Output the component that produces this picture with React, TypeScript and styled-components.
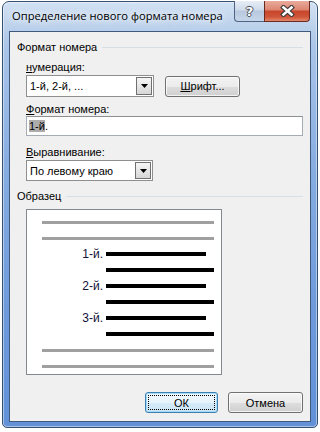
import styled, { createGlobalStyle, css } from "styled-components";

const GlobalStyle = createGlobalStyle`
  html, body {
    margin: 0;
    padding: 0;
    background: #fff;
  }
  body {
    font-family: "Liberation Sans", Arial, sans-serif;
    font-size: 11px;
    color: #000;
  }
  * {
    box-sizing: border-box;
  }
`;

const Page = styled.div`
  width: 320px;
  height: 432px;
  padding: 1px 0 0 2px;
`;

const Window = styled.div`
  width: 316px;
  height: 427px;
  border: 1px solid #34506f;
  border-radius: 7px 7px 5px 5px;
  background: linear-gradient(
    180deg,
    #d3e2f4 0px,
    #bed3ec 22px,
    #aac5e9 45px,
    #88aee2 160px,
    #6f9bdb 300px,
    #6291d8 427px
  );
  box-shadow: inset 0 0 0 1px rgba(255, 255, 255, 0.45);
  display: flex;
  flex-direction: column;
  padding: 0 6px 5px 6px;
`;

const TitleBar = styled.div`
  height: 29px;
  display: flex;
  align-items: flex-start;
`;

const Title = styled.div`
  flex: 1;
  padding: 6px 0 0 3px;
  font-family: "Open Sans", "Noto Sans", sans-serif;
  font-size: 11.2px;
  line-height: 15px;
  color: #000;
  text-shadow: 0 0 6px #fff, 0 0 10px rgba(255, 255, 255, 0.9);
  white-space: nowrap;
`;

const Controls = styled.div`
  display: flex;
  margin: -1px 1px 0 0;
`;

const CaptionButton = styled.div<{ $close?: boolean }>`
  height: 21px;
  width: ${(p) => (p.$close ? 46 : 30)}px;
  display: flex;
  align-items: center;
  justify-content: center;
  border: 1px solid #4f6482;
  border-top: none;
  ${(p) =>
    p.$close
      ? css`
          border-color: #6b2a20;
          border-radius: 0 0 4px 0;
          background: linear-gradient(
            180deg,
            #e9ab9d 0%,
            #dc8570 45%,
            #c7452b 50%,
            #d0553a 80%,
            #e38a6c 100%
          );
        `
      : css`
          border-right: none;
          border-radius: 0 0 0 4px;
          background: linear-gradient(
            180deg,
            #e6edf6 0%,
            #cfdbea 45%,
            #b7c8de 50%,
            #c6d6ea 100%
          );
        `}
`;

const HelpGlyph = styled.span`
  font-family: "DejaVu Sans", sans-serif;
  font-weight: bold;
  font-size: 13px;
  line-height: 13px;
  color: #fff;
  text-shadow: 1px 0 0 #4a4f5a, -1px 0 0 #4a4f5a, 0 1px 0 #4a4f5a,
    0 -1px 0 #4a4f5a;
`;

const Client = styled.div`
  flex: 1;
  background: #f0f0f0;
  border: 1px solid #3f5a7c;
  display: flex;
  flex-direction: column;
  padding: 8px 7px 8px 7px;
`;

const GroupHeader = styled.div<{ $top?: number }>`
  display: flex;
  align-items: center;
  gap: 5px;
  height: 15px;
  line-height: 15px;
  margin-top: ${(p) => p.$top ?? 0}px;
  &::after {
    content: "";
    flex: 1;
    height: 1px;
    background: #d5dfe5;
  }
`;

const Group = styled.div`
  display: flex;
  flex-direction: column;
  padding-left: 9px;
`;

const Label = styled.div<{ $top: number }>`
  height: 14px;
  line-height: 14px;
  margin-top: ${(p) => p.$top}px;
`;

const Row = styled.div`
  display: flex;
  align-items: center;
  gap: 11px;
  margin-top: 1px;
`;

const Combo = styled.div<{ $width: number; $height: number; $top?: number }>`
  width: ${(p) => p.$width}px;
  height: ${(p) => p.$height}px;
  margin-top: ${(p) => p.$top ?? 0}px;
  border: 1px solid #8e8f8f;
  background: #fff;
  display: flex;
  align-items: center;
  padding: 1px;
`;

const ComboText = styled.span`
  flex: 1;
  padding-left: 2px;
  white-space: nowrap;
`;

const DropButton = styled.div`
  width: 16px;
  height: 100%;
  border: 1px solid #707070;
  background: linear-gradient(180deg, #f6f6f6 0%, #e6e6e6 50%, #d6d6d6 100%);
  display: flex;
  align-items: center;
  justify-content: center;
`;

const PushButton = styled.div<{ $width: number; $default?: boolean }>`
  position: relative;
  width: ${(p) => p.$width}px;
  height: 21px;
  border: 1px solid #707070;
  border-radius: 3px;
  background: linear-gradient(
    180deg,
    #f3f3f3 0%,
    #ebebeb 50%,
    #dddddd 51%,
    #cfcfcf 100%
  );
  box-shadow: inset 0 0 0 1px rgba(255, 255, 255, 0.75);
  display: flex;
  align-items: center;
  justify-content: center;
  line-height: 14px;
  ${(p) =>
    p.$default &&
    css`
      border-color: #3c7fb1;
      box-shadow: inset 0 0 0 1px #a6dcf8;
      background: linear-gradient(
        180deg,
        #f2f9fd 0%,
        #e6f3fb 50%,
        #d6ebf8 51%,
        #cbe4f5 100%
      );
      &::after {
        content: "";
        position: absolute;
        inset: 2px;
        border: 1px dotted #000;
        border-radius: 1px;
      }
    `}
`;

const TextInput = styled.div`
  height: 20px;
  border: 1px solid #a5acb5;
  border-top-color: #8e8f8f;
  background: #fff;
  display: flex;
  align-items: center;
  padding-left: 2px;
`;

const Selected = styled.span`
  background: #acacac;
`;

const Preview = styled.div`
  width: 196px;
  height: 166px;
  margin-top: 5px;
  border: 1px solid #828790;
  background: #fff;
  padding: 4px 7px 0 15px;
  display: flex;
  flex-direction: column;
`;

const PreviewRow = styled.div`
  height: 16px;
  display: flex;
  align-items: center;
`;

const Num = styled.span`
  width: 64px;
  padding-right: 3px;
  text-align: right;
  font-size: 12px;
  color: #10103a;
`;

const Bar = styled.div<{ $grey?: boolean; $left?: number; $right?: number }>`
  flex: 1;
  height: ${(p) => (p.$grey ? 3 : 4)}px;
  background: ${(p) => (p.$grey ? "#a0a0a0" : "#000")};
  margin-left: ${(p) => p.$left ?? 0}px;
  margin-right: ${(p) => p.$right ?? 0}px;
`;

const Footer = styled.div`
  display: flex;
  justify-content: flex-end;
  gap: 10px;
  margin-top: 17px;
`;

const Arrow = () => (
  <svg width="7" height="4" viewBox="0 0 7 4">
    <path d="M0 0h7L3.5 4z" fill="#000" />
  </svg>
);

const CloseGlyph = () => (
  <svg width="15" height="12" viewBox="0 0 15 12">
    <path
      d="M3.5 2.5L11.5 9.5M11.5 2.5L3.5 9.5"
      stroke="#3a3a3a"
      strokeWidth="4.8"
      strokeLinecap="square"
      fill="none"
    />
    <path
      d="M3.5 2.5L11.5 9.5M11.5 2.5L3.5 9.5"
      stroke="#fff"
      strokeWidth="2.6"
      strokeLinecap="square"
      fill="none"
    />
  </svg>
);

const numbers = ["1-й.", "2-й.", "3-й."];

export default function App() {
  return (
    <>
      <GlobalStyle />
      <Page>
        <Window>
          <TitleBar>
            <Title>Определение нового формата номера</Title>
            <Controls>
              <CaptionButton>
                <HelpGlyph>?</HelpGlyph>
              </CaptionButton>
              <CaptionButton $close>
                <CloseGlyph />
              </CaptionButton>
            </Controls>
          </TitleBar>
          <Client>
            <GroupHeader>Формат номера</GroupHeader>
            <Group>
              <Label $top={5}>
                <u>н</u>умерация:
              </Label>
              <Row>
                <Combo $width={128} $height={22}>
                  <ComboText>1-й, 2-й, ...</ComboText>
                  <DropButton>
                    <Arrow />
                  </DropButton>
                </Combo>
                <PushButton $width={75}>
                  <span>
                    <u>Ш</u>рифт...
                  </span>
                </PushButton>
              </Row>
              <Label $top={5}>
                <u>Ф</u>ормат номера:
              </Label>
              <TextInput>
                <Selected>1-й</Selected>.
              </TextInput>
              <Label $top={9}>
                <u>В</u>ыравнивание:
              </Label>
              <Combo $width={127} $height={21} $top={1}>
                <ComboText>По левому краю</ComboText>
                <DropButton>
                  <Arrow />
                </DropButton>
              </Combo>
            </Group>
            <GroupHeader $top={8}>Образец</GroupHeader>
            <Group>
              <Preview>
                <PreviewRow>
                  <Bar $grey />
                </PreviewRow>
                <PreviewRow>
                  <Bar $grey />
                </PreviewRow>
                {numbers.map((n) => (
                  <div key={n}>
                    <PreviewRow>
                      <Num>{n}</Num>
                      <Bar $left={0} $right={8} />
                    </PreviewRow>
                    <PreviewRow>
                      <Bar $left={64} />
                    </PreviewRow>
                  </div>
                ))}
                <PreviewRow>
                  <Bar $grey />
                </PreviewRow>
                <PreviewRow>
                  <Bar $grey />
                </PreviewRow>
              </Preview>
            </Group>
            <Footer>
              <PushButton $width={73} $default>
                ОК
              </PushButton>
              <PushButton $width={75}>Отмена</PushButton>
            </Footer>
          </Client>
        </Window>
      </Page>
    </>
  );
}
